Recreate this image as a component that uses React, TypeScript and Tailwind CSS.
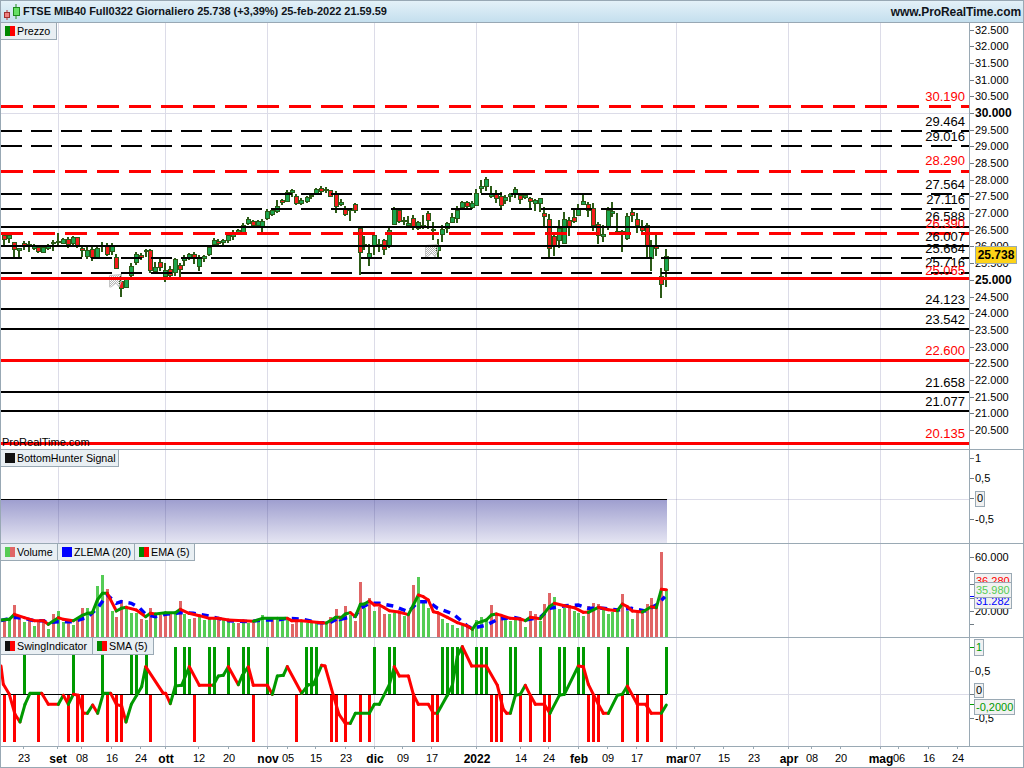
import React from "react";

type Candle = [number, number, number, number, number, string];

// coordinates read off 3x crops: first block has origin (0,180), second (340,170)
const c1: Candle[] = [
  [13,160,195,165,178,"r"],[28,160,188,166,176,"g"],[43,185,230,188,208,"r"],[58,205,232,205,210,"g"],
  [73,183,210,190,196,"r"],[88,184,215,192,198,"g"],[103,192,210,195,204,"g"],[115,195,220,203,215,"r"],
  [130,195,220,202,218,"g"],[145,192,210,195,205,"g"],[160,180,212,186,190,"g"],[175,160,195,183,187,"g"],
  [190,175,192,178,190,"g"],[205,170,205,178,193,"r"],[220,168,195,172,190,"g"],[232,170,205,172,195,"r"],
  [247,195,230,205,212,"r"],[262,200,238,210,230,"g"],[277,200,242,208,232,"r"],[292,195,235,205,232,"g"],
  [307,185,215,195,200,"g"],[322,190,228,200,222,"r"],[335,190,225,200,215,"g"],[349,222,268,232,265,"r"],
  [364,282,350,305,325,"r"],[379,290,325,295,322,"g"],[394,250,290,260,285,"g"],[409,215,255,222,248,"g"],
  [424,220,240,225,232,"r"],[437,208,232,210,215,"g"],[451,208,280,210,270,"r"],[466,245,278,262,274,"g"],
  [481,238,272,248,262,"r"],[496,250,305,272,288,"g"],[511,258,292,268,285,"r"],[526,235,288,238,278,"g"],
  [541,250,290,255,268,"r"],[552,226,258,232,240,"g"],[567,218,240,222,235,"g"],[583,215,252,222,232,"r"],
  [598,225,272,235,260,"g"],[613,225,245,228,235,"g"],[628,195,228,202,224,"g"],[643,175,198,180,192,"g"],
  [655,178,202,184,190,"r"],[670,178,195,182,188,"g"],[685,155,190,165,182,"g"],[700,150,180,162,170,"g"],
  [715,148,165,152,160,"g"],[730,130,165,135,158,"g"],[745,112,135,117,130,"g"],[760,120,138,123,135,"r"],
  [775,120,138,125,135,"g"],[787,118,155,125,140,"g"],[802,88,120,94,116,"g"],[817,85,108,90,102,"g"],
  [832,60,100,80,95,"g"],[847,58,74,62,68,"r"],[862,30,66,37,64,"g"],[875,28,50,32,38,"g"],
  [888,42,75,48,70,"r"],[904,55,76,60,70,"g"],[920,48,68,52,65,"g"],[934,42,58,45,50,"g"],
  [949,24,46,28,40,"g"],[964,18,38,25,33,"r"],[979,22,40,27,30,"g"],[990,30,52,32,50,"r"],[1007,32,98,42,80,"r"],
];
const c2: Candle[] = [
  [2,88,108,96,104,"g"],[16,108,138,118,134,"r"],[31,115,153,115,122,"g"],[46,100,128,104,122,"r"],
  [61,172,315,176,248,"r"],[73,198,240,222,228,"g"],[88,222,288,250,262,"g"],[103,192,255,196,225,"g"],
  [118,208,246,222,226,"r"],[133,208,255,212,238,"r"],[148,175,235,182,225,"g"],[163,112,165,118,163,"g"],
  [176,118,158,122,155,"r"],[191,142,165,150,155,"g"],[205,138,170,160,166,"g"],[220,135,180,145,172,"r"],
  [235,152,180,156,175,"g"],[250,135,178,165,172,"g"],[265,122,178,130,152,"r"],[278,155,210,178,182,"g"],
  [293,208,265,226,240,"g"],[307,165,215,178,194,"g"],[322,155,190,160,175,"g"],[337,130,160,142,156,"g"],
  [352,108,158,120,146,"g"],[367,92,115,97,112,"g"],[382,92,115,98,108,"r"],[397,92,118,100,112,"g"],
  [409,58,108,70,106,"g"],[424,30,70,48,55,"g"],[439,22,62,28,50,"g"],[454,48,85,70,78,"g"],
  [469,60,100,74,85,"r"],[484,65,115,80,106,"r"],[496,75,102,82,92,"g"],[511,68,95,72,80,"g"],
  [526,52,85,58,70,"g"],[541,70,102,76,88,"r"],[556,75,88,76,82,"g"],[571,82,115,86,94,"r"],
  [586,88,122,92,100,"g"],[601,85,125,86,100,"g"],[613,112,170,130,140,"r"],[628,132,268,148,235,"r"],
  [643,195,258,200,228,"r"],[658,150,235,175,212,"g"],[673,125,222,148,220,"g"],[688,142,198,152,170,"r"],
  [703,120,160,142,155,"r"],[715,102,138,118,135,"g"],[730,75,105,95,102,"g"],[745,95,142,104,122,"r"],
  [760,100,182,115,165,"r"],[775,155,222,162,196,"r"],[790,165,215,192,198,"g"],[805,112,180,120,172,"g"],
  [817,97,140,125,130,"g"],[832,128,188,184,188,"g"],[847,180,245,184,190,"g"],[862,130,210,140,206,"g"],
  [877,118,155,128,135,"r"],[892,128,188,148,165,"r"],[907,150,185,170,180,"r"],[922,158,268,165,228,"r"],
  [934,210,302,228,265,"g"],[949,195,258,225,235,"r"],[964,295,384,318,342,"r"],[979,238,352,258,302,"g"],
];

const vol1: [number, number, string][] = [
  [13,572,"r"],[28,568,"g"],[43,525,"r"],[58,565,"r"],[73,575,"g"],[88,572,"r"],[103,587,"g"],[115,577,"r"],
  [130,568,"r"],[145,596,"g"],[160,552,"r"],[175,543,"g"],[190,575,"g"],[205,570,"r"],[220,584,"g"],[232,570,"r"],
  [247,533,"r"],[262,533,"g"],[277,548,"r"],[292,468,"g"],[307,435,"g"],[322,477,"r"],[335,543,"g"],[349,560,"r"],
  [364,510,"r"],[379,538,"g"],[394,549,"g"],[409,549,"g"],[424,568,"r"],[437,570,"g"],[451,534,"r"],[466,565,"g"],
  [481,555,"r"],[496,550,"r"],[511,548,"r"],[526,550,"g"],[541,513,"r"],[552,552,"g"],[567,567,"g"],[583,563,"r"],
  [598,560,"g"],[613,570,"g"],[628,565,"g"],[643,568,"g"],[655,565,"r"],[670,570,"g"],[685,575,"g"],[700,580,"g"],
  [715,580,"r"],[730,575,"g"],[745,580,"g"],[760,578,"r"],[775,570,"g"],[787,555,"g"],[802,568,"g"],[817,562,"r"],
  [832,570,"g"],[847,565,"g"],[862,570,"g"],[875,582,"r"],[888,572,"r"],[904,575,"g"],[920,578,"g"],[934,578,"g"],
  [949,580,"g"],[964,582,"r"],[979,580,"g"],[990,562,"r"],[1007,538,"r"],
];
const vol2: [number, number, string][] = [
  [1,240,"g"],[16,198,"r"],[31,225,"g"],[46,243,"r"],[61,126,"r"],[73,205,"g"],[88,175,"r"],[103,212,"g"],
  [118,200,"r"],[133,222,"r"],[148,222,"g"],[163,218,"g"],[176,215,"r"],[191,228,"g"],[205,220,"r"],[220,135,"r"],
  [235,112,"g"],[250,180,"g"],[265,205,"g"],[293,220,"r"],[307,238,"g"],[322,250,"g"],[337,256,"g"],[352,264,"g"],
  [367,255,"g"],[382,258,"r"],[397,270,"g"],[409,240,"g"],[424,232,"g"],[439,238,"g"],[454,195,"r"],[469,218,"r"],
  [484,230,"r"],[496,240,"g"],[511,243,"g"],[526,240,"g"],[541,235,"r"],[556,260,"g"],[571,213,"r"],[586,222,"r"],
  [601,243,"g"],[613,192,"r"],[628,160,"r"],[643,172,"g"],[658,208,"g"],[673,203,"g"],[688,195,"r"],[703,213,"g"],
  [715,218,"g"],[730,228,"g"],[745,198,"r"],[760,190,"r"],[775,192,"r"],[790,210,"g"],[805,222,"g"],[817,215,"g"],
  [832,208,"g"],[847,163,"r"],[862,213,"g"],[877,238,"g"],[892,218,"r"],[907,215,"r"],[922,192,"r"],[934,174,"r"],
  [949,192,"r"],[964,37,"r"],[979,148,"g"],
];

const ema: [number, number][] = [
  ...([[3,570],[28,568],[43,553],[73,563],[103,572],[130,572],[145,583],[175,563],[190,568],[220,572],[247,556],[262,550],[277,548],[292,510],[307,490],[322,490],[349,543],[364,535],[379,532],[409,540],[437,560],[451,550],[466,552],[496,548],[526,548],[541,538],[567,550],[598,557],[628,565],[655,565],[685,570],[730,572],[760,574],[787,565],[832,565],[862,565],[875,572],[904,572],[934,575],[964,578],[979,579],[1007,562],[1020,562]].map(([x, y]) => [x / 3, 430 + y / 3]) as [number, number][]),
  ...([[1,235],[16,222],[31,218],[46,230],[61,193],[73,192],[88,183],[103,195],[118,195],[133,203],[148,212],[176,216],[205,224],[220,195],[235,165],[250,170],[265,180],[280,215],[293,218],[322,232],[352,248],[382,258],[397,268],[409,250],[439,240],[454,225],[469,222],[484,226],[511,235],[541,237],[556,242],[571,232],[601,236],[613,220],[628,200],[643,190],[673,197],[703,203],[730,217],[745,217],[775,202],[805,209],[832,212],[847,192],[862,200],[877,213],[907,216],[934,200],[949,203],[964,148],[979,149]].map(([x, y]) => [340 + x / 3, 540 + y / 3]) as [number, number][]),
];
const zlema: [number, number][] = [
  ...([[3,572],[43,562],[73,565],[103,572],[130,572],[145,578],[175,575],[220,575],[262,562],[292,535],[322,495],[349,520],[364,515],[394,520],[420,535],[437,553],[466,560],[496,553],[541,548],[580,550],[622,557],[655,565],[685,572],[745,575],[787,570],[832,570],[862,565],[904,567],[955,578],[990,578],[1020,562]].map(([x, y]) => [x / 3, 430 + y / 3]) as [number, number][]),
  ...([[1,238],[46,228],[61,205],[88,190],[118,190],[160,198],[205,215],[235,185],[265,185],[293,205],[340,222],[382,258],[397,265],[440,255],[475,237],[520,232],[556,240],[601,232],[630,205],[675,197],[715,195],[745,205],[790,205],[835,210],[875,205],[915,213],[949,195],[975,170]].map(([x, y]) => [340 + x / 3, 540 + y / 3]) as [number, number][]),
];
const sma: [number, number][] = [
  ...([[3,90],[10,145],[28,175],[45,235],[60,258],[75,205],[90,172],[125,172],[145,205],[175,205],[190,178],[205,205],[220,175],[235,178],[250,232],[262,232],[278,207],[293,232],[310,172],[332,172],[349,205],[365,210],[378,258],[394,205],[410,178],[425,152],[437,92],[490,172],[497,172],[511,203],[526,150],[545,148],[568,92],[598,148],[640,148],[655,120],[670,118],[685,92],[715,146],[727,118],[745,92],[760,148],[802,148],[817,175],[832,120],[850,118],[862,92],[905,172],[925,146],[940,146],[965,88],[975,90],[1000,178],[1017,235]].map(([x, y]) => [x / 3, 636 + y / 3]) as [number, number][]),
  ...([[16,262],[31,262],[46,232],[88,232],[103,205],[118,205],[148,146],[163,92],[178,120],[205,120],[220,175],[235,205],[265,205],[280,232],[292,232],[322,178],[337,148],[352,60],[367,32],[395,90],[439,90],[472,148],[490,220],[500,232],[511,232],[526,178],[541,175],[556,148],[571,178],[586,205],[613,205],[630,232],[658,178],[673,175],[715,90],[730,92],[745,145],[775,205],[790,232],[805,232],[832,178],[847,175],[862,150],[892,205],[917,205],[934,232],[964,232],[979,207]].map(([x, y]) => [340 + x / 3, 636 + y / 3]) as [number, number][]),
];

const swingGreen = [
  ...[73,220,307,394,409,437,526,553,568,628,643,685,730,745,802,919,934,949].map((x) => x / 3),
  ...[103,148,163,307,322,337,352,367,409,424,439,511,526,601,658,673,715,730,805,862,979].map((x) => 340 + x / 3),
];
const swingRed = [
  ...[13,43,115,205,232,247,322,349,364,451,583,760,889,992,1007].map((x) => x / 3),
  ...[16,61,88,220,277,292,454,469,484,541,571,613,628,745,760,775,847,892,922,964].map((x) => 340 + x / 3),
];

const gridX = [58.5, 165.5, 267.5, 374.5, 476.5, 578.5, 676.5, 788.5, 880.5];

const redDash = [106, 171, 233];
const blackDash = [130.5, 145.5, 193.5, 208.5, 258, 273];
const blackSolid = [227, 246, 309, 329, 392, 411];
const redSolid = [278.5, 360, 443];

const levels: [string, number, boolean][] = [
  ["30.190", 96, true],["29.464", 121, false],["29.016", 136, false],["28.290", 160, true],["27.564", 184, false],
  ["27.116", 199, false],["26.588", 216, false],["26.390", 223, true],["26.007", 236, false],["25.664", 248, false],
  ["25.716", 262, false],["25.065", 270, true],["24.123", 299, false],["23.542", 319, false],["22.600", 350, true],
  ["21.658", 382, false],["21.077", 401, false],["20.135", 433, true],
];

const priceAxis = ["32.500","32.000","31.500","31.000","30.500","30.000","29.500","29.000","28.500","28.000","27.500","27.000","26.500","26.000","25.500","25.000","24.500","24.000","23.500","23.000","22.500","22.000","21.500","21.000","20.500"];

const dates: [string, number, boolean][] = [
  ["23",23,false],["set",57,true],["08",81,false],["16",111,false],["24",140,false],["ott",165,true],["12",198,false],["20",228,false],
  ["nov",267,true],["05",287,false],["15",315,false],["23",345,false],["dic",374,true],["09",402,false],["17",431,false],["2022",476,true],
  ["14",520,false],["24",548,false],["feb",578,true],["09",607,false],["17",636,false],["mar",676,true],["07",694,false],["15",723,false],
  ["23",753,false],["apr",788,true],["08",811,false],["20",840,false],["mag",880,true],["06",898,false],["16",928,false],["24",957,false],
];

function Grid({ top, h }: { top: number; h: number }) {
  return (
    <>
      {gridX.map((x) => (
        <line key={x} x1={x} x2={x} y1={top} y2={top + h} stroke="#50508c" strokeOpacity={0.2} strokeWidth={1} />
      ))}
    </>
  );
}

// one coloured segment per step: rising is green, falling is red
function TrendLine({ pts, width }: { pts: [number, number][]; width: number }) {
  let last = "#009900";
  return (
    <>
      {pts.slice(1).map((p, i) => {
        const prev = pts[i];
        if (p[1] < prev[1]) last = "#009900";
        else if (p[1] > prev[1]) last = "#ff0000";
        return (
          <line key={i} x1={prev[0]} y1={prev[1]} x2={p[0]} y2={p[1]} stroke={last} strokeWidth={width} strokeLinecap="round" />
        );
      })}
    </>
  );
}

function CandleBar({ x, top, bot, bt, bb, col }: { x: number; top: number; bot: number; bt: number; bb: number; col: string }) {
  const cx = Math.round(x);
  return (
    <g shapeRendering="crispEdges">
      <rect x={cx - 1} y={top} width={2} height={bot - top} fill="#2b5a16" />
      <rect x={cx - 2} y={bt} width={4} height={Math.max(bb - bt, 1)} fill={col === "r" ? "#f41c1c" : "#1aa64e"} stroke="#2b5a16" strokeWidth={1} />
    </g>
  );
}

function Flag({ x, y }: { x: number; y: number }) {
  return (
    <svg x={x} y={y} width={14} height={14} viewBox="0 0 14 14">
      <defs>
        <pattern id={`chk${x}`} width="2" height="2" patternUnits="userSpaceOnUse">
          <rect width="1" height="1" fill="#b4b4b4" />
          <rect x="1" y="1" width="1" height="1" fill="#b4b4b4" />
        </pattern>
      </defs>
      <path d="M0.5 1.5 L12.5 0.5 L12.5 7 L10 13 L7 9 L2 13 L0.5 13 Z" fill={`url(#chk${x})`} stroke="#c4c4c4" strokeWidth="1" />
    </svg>
  );
}

function Legend({ children, w }: { children: React.ReactNode; w: number }) {
  return (
    <div
      className="flex items-center gap-[2px] h-[17px] pl-[4px] bg-[#e9eff3] border-r border-b border-[#9aa9b4] text-[10.7px] leading-none whitespace-nowrap text-black"
      style={{ width: w }}
    >
      {children}
    </div>
  );
}

function Swatch({ a, b }: { a: string; b?: string }) {
  return (
    <span className="flex w-[10px] h-[10px] shrink-0">
      <span className="flex-1" style={{ background: a }} />
      <span className="flex-1" style={{ background: b ?? a }} />
    </span>
  );
}

function AxisRow({ children, cls = "" }: { children: React.ReactNode; cls?: string }) {
  return (
    <div className={`flex items-center gap-[1px] text-[11px] leading-none whitespace-nowrap text-black ${cls}`}>
      <span className="w-[4px] h-px bg-[#6f7b84]" />
      {children}
    </div>
  );
}

function AxisText({ y, children, cls = "text-black" }: { y: number; children: React.ReactNode; cls?: string }) {
  return (
    <span className={`absolute left-[5px] -translate-y-1/2 text-[11px] leading-none whitespace-nowrap ${cls}`} style={{ top: y }}>
      {children}
    </span>
  );
}

function Tick({ y, cls = "bg-[#6f7b84]" }: { y: number; cls?: string }) {
  return <span className={`absolute left-0 w-[4px] h-px ${cls}`} style={{ top: y }} />;
}

function AxisBox({ y, h, children, cls = "text-black" }: { y: number; h: number; children: React.ReactNode; cls?: string }) {
  return (
    <span
      className={`absolute left-[4px] flex items-center px-px bg-[#f1f1f1] border border-[#9aa9b4] text-[11px] leading-none whitespace-nowrap ${cls}`}
      style={{ top: y, height: h }}
    >
      {children}
    </span>
  );
}

export default function App() {
  return (
    <div className="w-[1024px] h-[768px] flex flex-col bg-white border-l border-r border-b border-[#98a8b4] overflow-hidden font-['Liberation_Sans',Arial,sans-serif]">
      <div className="flex items-center justify-between h-[23px] shrink-0 pr-[2px] bg-gradient-to-b from-[#e4f1f8] to-[#c4dfee] border-t border-b border-[#98a8b4]">
        <div className="flex items-center gap-[2px]">
          <svg width="18" height="16" viewBox="0 0 18 16" className="ml-[2px]">
            <line x1="4" y1="6" x2="4" y2="16" stroke="#b03030" />
            <rect x="1.5" y="8.5" width="5" height="5" fill="#f08080" stroke="#a03030" />
            <line x1="13" y1="0" x2="13" y2="15" stroke="#1e8a1e" />
            <rect x="10.5" y="3.5" width="6" height="8" fill="#66e066" stroke="#1e8a1e" />
          </svg>
          <span className="text-[11px] font-bold leading-none tracking-[-0.04px] text-[#10141a]">
            FTSE MIB40 Full0322 Giornaliero 25.738 (+3,39%) 25-feb-2022 21.59.59
          </span>
        </div>
        <span className="text-[12px] font-bold leading-none tracking-[-0.1px] text-[#10141a]">www.ProRealTime.com</span>
      </div>

      {/* price */}
      <div className="flex h-[427px] shrink-0 border-b border-[#9aa9b4]">
        <div className="relative w-[968px] shrink-0">
          <svg className="absolute inset-0" width={968} height={426} viewBox="1 23 968 426">
            <Grid top={23} h={426} />
            <line x1={0} x2={969} y1={113.5} y2={113.5} stroke="#dcdce8" />
            {c1.map((c, i) => (
              <CandleBar key={i} x={c[0] / 3} top={180 + c[1] / 3} bot={180 + c[2] / 3} bt={180 + c[3] / 3} bb={180 + c[4] / 3} col={c[5]} />
            ))}
            {c2.map((c, i) => (
              <CandleBar key={i} x={340 + c[0] / 3} top={170 + c[1] / 3} bot={170 + c[2] / 3} bt={170 + c[3] / 3} bb={170 + c[4] / 3} col={c[5]} />
            ))}
            <Flag x={109} y={274} />
            <Flag x={425} y={244} />
            {blackSolid.map((y) => (
              <line key={y} x1={1} x2={969} y1={y} y2={y} stroke="#000" strokeWidth={2} shapeRendering="crispEdges" />
            ))}
            {blackDash.map((y) => (
              <line key={y} x1={1} x2={969} y1={y} y2={y} stroke="#000" strokeWidth={2} strokeDasharray="21 9" shapeRendering="crispEdges" />
            ))}
            {redDash.map((y) => (
              <line key={y} x1={1} x2={969} y1={y} y2={y} stroke="#ff0000" strokeWidth={3} strokeDasharray="22 10" shapeRendering="crispEdges" />
            ))}
            {redSolid.map((y) => (
              <line key={y} x1={1} x2={969} y1={y} y2={y} stroke="#ff0000" strokeWidth={3} shapeRendering="crispEdges" />
            ))}
          </svg>
          <div className="absolute left-0 top-0">
            <Legend w={56}>
              <Swatch a="#008800" b="#ff0000" />
              Prezzo
            </Legend>
          </div>
          {levels.map(([t, y, red]) => (
            <span
              key={t}
              className={`absolute right-[4px] -translate-y-1/2 text-[13px] leading-none ${red ? "text-[#ff0000]" : "text-black"}`}
              style={{ top: y - 23 }}
            >
              {t}
            </span>
          ))}
          <span className="absolute left-[1px] top-[414px] text-[11px] leading-none text-black">ProRealTime.com</span>
        </div>
        <div className="relative flex-1 border-l border-[#9aa9b4] overflow-hidden">
          <div className="flex flex-col -mt-[1.35px]">
            {priceAxis.map((t) => (
              <div key={t} className="flex items-center h-[16.7px]">
                <AxisRow cls={t === "30.000" || t === "25.000" ? "font-bold text-[12px]" : ""}>{t}</AxisRow>
              </div>
            ))}
          </div>
          <span className="absolute left-[5px] top-[223px] flex items-center justify-center w-[42px] h-[18px] bg-[#fdd318] border border-[#9aa9b4] text-[12px] font-bold leading-none text-black">
            25.738
          </span>
        </div>
      </div>

      {/* signal */}
      <div className="flex h-[94px] shrink-0 border-b border-[#9aa9b4]">
        <div className="relative w-[968px] shrink-0">
          <svg className="absolute inset-0" width={968} height={93} viewBox="1 450 968 93">
            <defs>
              <linearGradient id="sig" x1="0" y1="0" x2="0" y2="1">
                <stop offset="0" stopColor="#9e9ecf" />
                <stop offset="1" stopColor="#e6e6f3" />
              </linearGradient>
            </defs>
            <rect x={1} y={499.5} width={666} height={44} fill="url(#sig)" />
            <line x1={1} x2={969} y1={499.5} y2={499.5} stroke="#dcdce8" />
            <Grid top={450} h={93} />
            <line x1={1} x2={667} y1={499.5} y2={499.5} stroke="#000" strokeWidth={1} />
          </svg>
          <div className="absolute left-0 top-0">
            <Legend w={118}>
              <Swatch a="#111111" />
              BottomHunter Signal
            </Legend>
          </div>
        </div>
        <div className="relative flex-1 border-l border-[#9aa9b4]">
          <div className="flex flex-col -mt-[2px]">
            <div className="flex items-center h-[20.3px]"><AxisRow>1</AxisRow></div>
            <div className="flex items-center h-[20.3px]"><AxisRow>0,5</AxisRow></div>
            <div className="flex items-center h-[20.3px]">
              <AxisRow>
                <span className="flex items-center h-[16px] px-px bg-[#f1f1f1] border border-[#9aa9b4]">0</span>
              </AxisRow>
            </div>
            <div className="flex items-center h-[20.3px]"><AxisRow>-0,5</AxisRow></div>
          </div>
        </div>
      </div>

      {/* volume */}
      <div className="flex h-[94px] shrink-0 border-b border-[#9aa9b4]">
        <div className="relative w-[968px] shrink-0">
          <svg className="absolute inset-0" width={968} height={93} viewBox="1 544 968 93">
            <Grid top={544} h={93} />
            <g shapeRendering="crispEdges">
              {vol1.map(([x, y, c], i) => (
                <rect key={i} x={Math.round(x / 3) - 1} y={430 + y / 3} width={3} height={637 - (430 + y / 3)} fill={c === "r" ? "#e06666" : "#55cc55"} />
              ))}
              {vol2.map(([x, y, c], i) => (
                <rect key={i} x={Math.round(340 + x / 3) - 1} y={540 + y / 3} width={3} height={637 - (540 + y / 3)} fill={c === "r" ? "#e06666" : "#55cc55"} />
              ))}
            </g>
            <polyline points={zlema.map((p) => p.join(",")).join(" ")} fill="none" stroke="#0000ff" strokeWidth={3.5} strokeDasharray="7 6" />
            <TrendLine pts={ema} width={3} />
          </svg>
          <div className="absolute left-0 top-0 flex">
            <Legend w={57}>
              <Swatch a="#55cc55" b="#e06666" />
              Volume
            </Legend>
            <Legend w={77}>
              <Swatch a="#0000ff" />
              ZLEMA (20)
            </Legend>
            <Legend w={60}>
              <Swatch a="#008800" b="#ff0000" />
              EMA (5)
            </Legend>
          </div>
        </div>
        <div className="relative flex-1 border-l border-[#9aa9b4]">
          {[13, 27, 40, 54, 67, 80].map((y) => (
            <Tick key={y} y={y} />
          ))}
          <AxisText y={13}>60.000</AxisText>
          <AxisText y={67}>20.000</AxisText>
          <Tick y={52} cls="bg-[#0000ff]" />
          <AxisBox y={29} h={16} cls="text-[#ff0000]">36.280</AxisBox>
          <AxisBox y={49} h={16} cls="text-[#0000ff]">31.282</AxisBox>
          <AxisBox y={38} h={16} cls="text-[#55cc55]">35.980</AxisBox>
        </div>
      </div>

      {/* swing */}
      <div className="flex h-[109px] shrink-0 border-b border-[#9aa9b4]">
        <div className="relative w-[968px] shrink-0">
          <svg className="absolute inset-0" width={968} height={108} viewBox="1 638 968 108">
            <Grid top={638} h={108} />
            <line x1={1} x2={969} y1={694.5} y2={694.5} stroke="#dcdce8" />
            <g shapeRendering="crispEdges">
              {swingGreen.map((x, i) => (
                <rect key={i} x={Math.round(x) - 1} y={647} width={3} height={47} fill="#009900" />
              ))}
              {swingRed.map((x, i) => (
                <rect key={i} x={Math.round(x) - 1} y={695} width={3} height={47} fill="#ff0000" />
              ))}
            </g>
            <line x1={1} x2={667} y1={694.5} y2={694.5} stroke="#000" strokeWidth={1} />
            <TrendLine pts={sma} width={3} />
          </svg>
          <div className="absolute left-0 top-0 flex">
            <Legend w={92}>
              <Swatch a="#111111" b="#ff0000" />
              SwingIndicator
            </Legend>
            <Legend w={61}>
              <Swatch a="#008800" b="#ff0000" />
              SMA (5)
            </Legend>
          </div>
        </div>
        <div className="relative flex-1 border-l border-[#9aa9b4]">
          <Tick y={9} cls="bg-[#009900]" />
          <AxisBox y={1} h={17} cls="text-[#009900]">1</AxisBox>
          <Tick y={33} />
          <AxisText y={33}>0,5</AxisText>
          <Tick y={56} />
          <AxisBox y={45} h={15}>0</AxisBox>
          <Tick y={80} />
          <AxisText y={80}>-0,5</AxisText>
          <Tick y={66} cls="bg-[#009900]" />
          <AxisBox y={61} h={16} cls="text-[#009900]">-0,2000</AxisBox>
        </div>
      </div>

      {/* dates */}
      <div className="relative flex-1 w-[969px]">
        {dates.map(([t, x, bold], i) => (
          <React.Fragment key={i}>
            <span className="absolute top-0 w-px h-[2px] bg-[#9aa9b4]" style={{ left: x - 1 }} />
            <span
              className={`absolute top-[6px] ${bold ? "font-bold text-[12px]" : "text-[11px]"} leading-none text-black -translate-x-1/2`}
              style={{ left: x }}
            >
              {t}
            </span>
          </React.Fragment>
        ))}
      </div>
    </div>
  );
}
